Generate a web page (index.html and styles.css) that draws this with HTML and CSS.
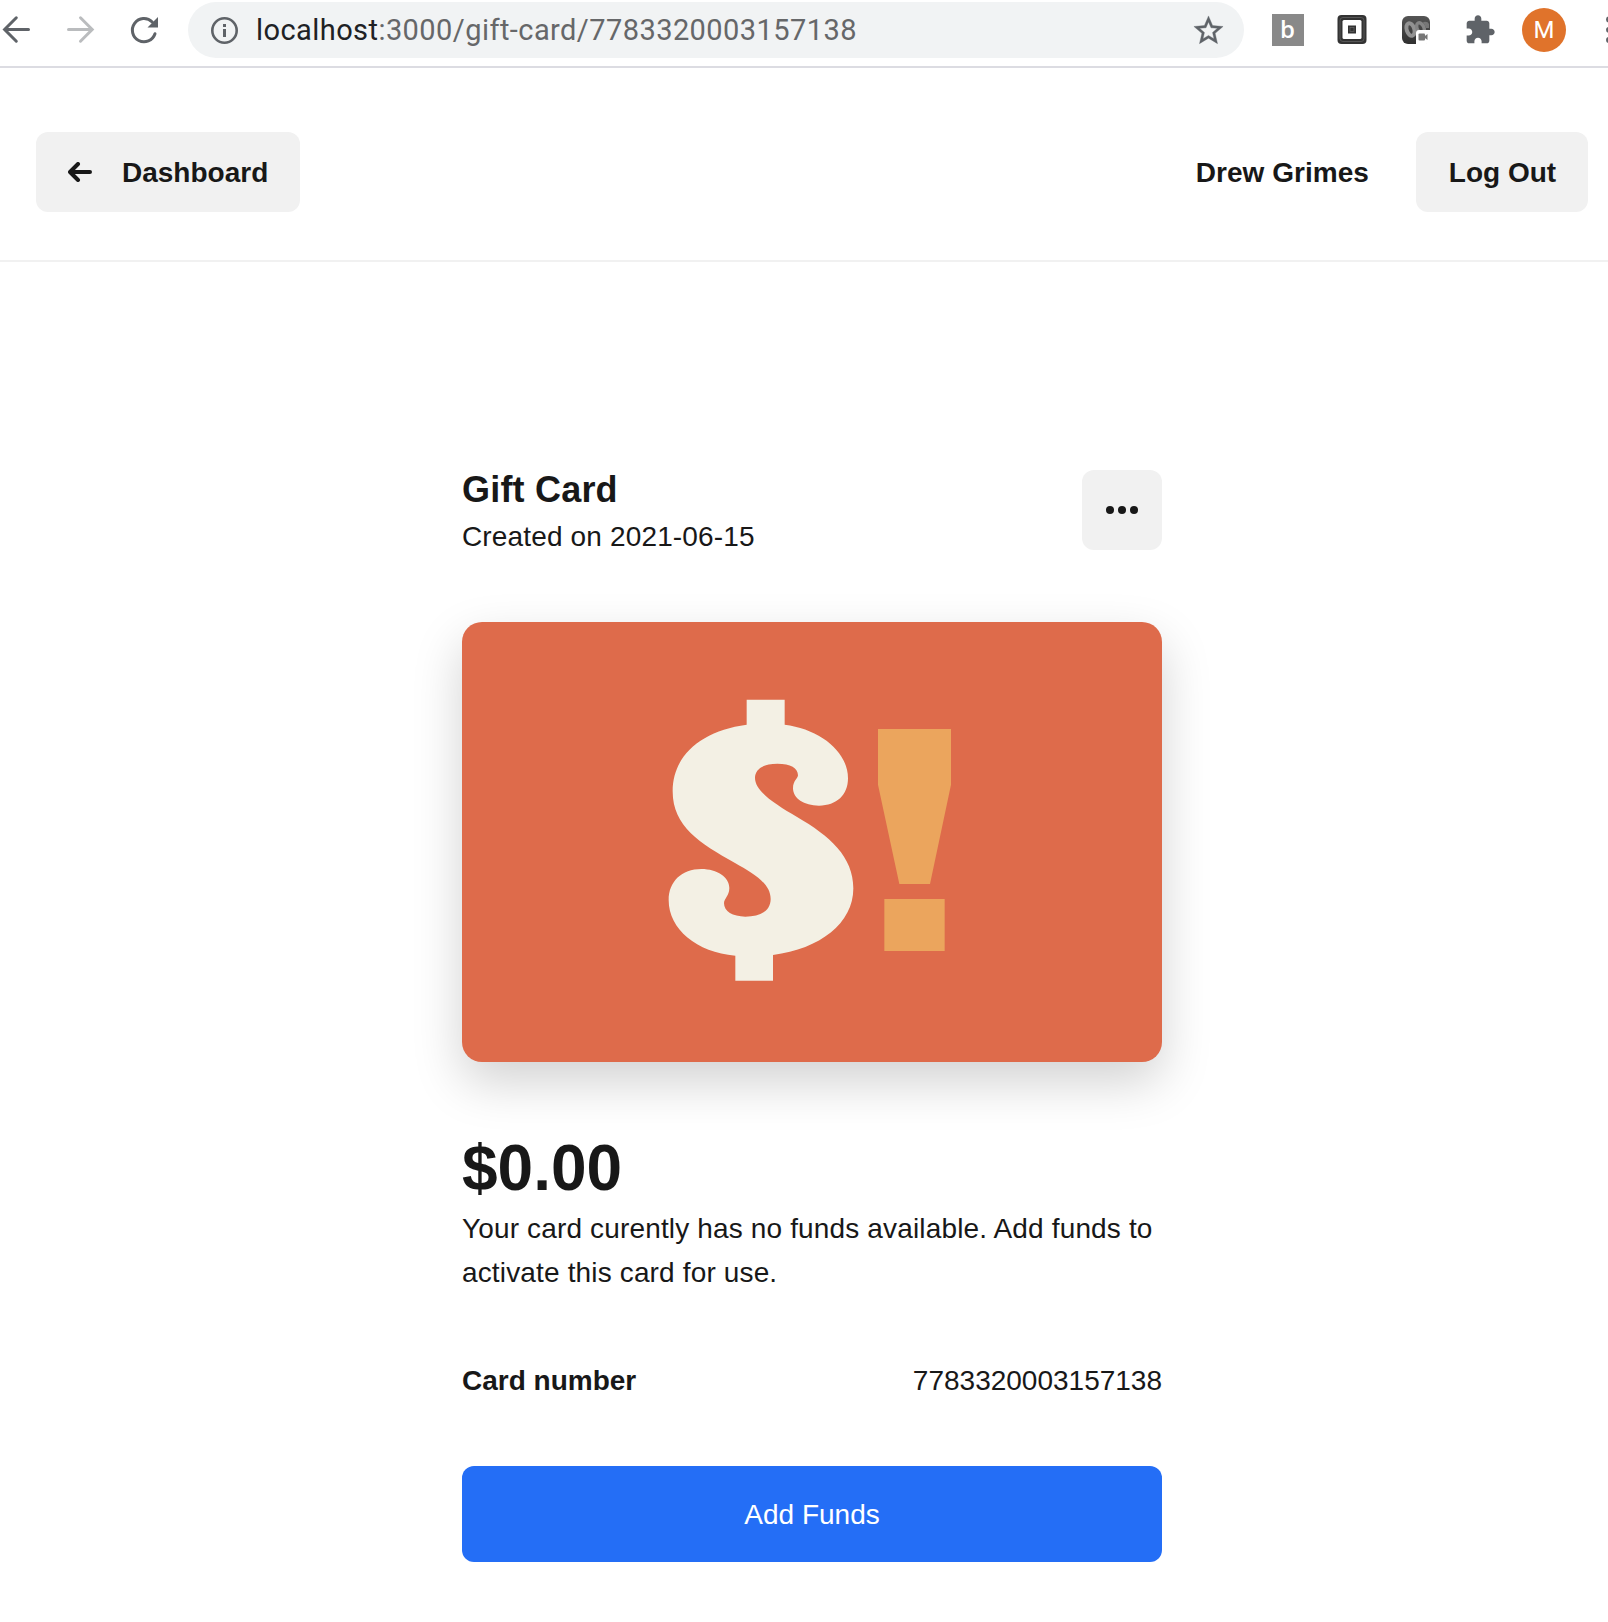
FILE: index.html
```html
<!DOCTYPE html>
<html lang="en">
<head>
<meta charset="utf-8">
<title>Gift Card</title>
<link rel="stylesheet" href="styles.css">
</head>
<body>
<div class="browser-bar">
  <svg class="nav-icon" viewBox="0 0 32 32"><path d="M28.5 15.5H5M16.300 3.800L4.600 15.500L16.300 27.200" fill="none" stroke="#5f6368" stroke-width="3" stroke-linejoin="miter" stroke-linecap="round"/></svg>
  <svg class="nav-icon" viewBox="0 0 32 32"><path d="M4.500 15.500H27.500M16.500 3.800L28.200 15.500L16.500 27.200" fill="none" stroke="#babcbe" stroke-width="3" stroke-linecap="round"/></svg>
  <svg class="nav-icon" viewBox="0 0 32 32"><path d="M27 19.800A11.600 11.600 0 1 1 24.200 8" fill="none" stroke="#5f6368" stroke-width="3" stroke-linecap="round"/><path d="M30 3V13.500H19.500Z" fill="#5f6368"/></svg>
  <div class="address">
    <svg class="info-icon" viewBox="0 0 28 28"><circle cx="14.500" cy="14.500" r="12.200" fill="none" stroke="#5f6368" stroke-width="2.600"/><path d="M13 8h3v3h-3zM13 13h3v8h-3z" fill="#5f6368"/></svg>
    <span class="url"><span class="host">localhost</span>:3000/gift-card/7783320003157138</span>
    <svg class="star-icon" viewBox="0 0 24 24"><path fill="#5f6368" stroke="#5f6368" stroke-width=".25" d="M22 9.240l-7.190-.620L12 2 9.190 8.630 2 9.240l5.460 4.730L5.820 21 12 17.270 18.180 21l-1.630-7.030L22 9.240zM12 15.400l-3.760 2.270 1-4.280-3.320-2.880 4.380-.380L12 6.100l1.710 4.040 4.380.380-3.320 2.880 1 4.280L12 15.400z"/></svg>
  </div>
  <div class="extensions">
    <span class="ext-b">b</span>
    <svg class="ext" viewBox="0 0 32 32"><rect x="1.500" y="1" width="29" height="29" rx="4" fill="#333"/><rect x="4" y="3.500" width="24" height="24" rx="3" fill="none" stroke="#606060" stroke-width=".8"/><rect x="6.500" y="6" width="19" height="19" rx="1.500" fill="#fff"/><rect x="12" y="11.500" width="8" height="8" fill="#333"/><rect x="14" y="13.500" width="4" height="4" fill="none" stroke="#666" stroke-width=".7"/></svg>
    <svg class="ext" viewBox="0 0 32 32">
      <defs><linearGradient id="tile" x1="0" y1="0" x2="0" y2="1"><stop offset="0" stop-color="#555"/><stop offset="1" stop-color="#303030"/></linearGradient></defs>
      <rect x="2" y="2" width="28" height="28" rx="6" fill="url(#tile)"/>
      <ellipse cx="10.500" cy="15.500" rx="3.800" ry="6.500" transform="rotate(-18 10.500 15.500)" fill="none" stroke="#929292" stroke-width="4"/>
      <ellipse cx="20.500" cy="14" rx="3.400" ry="5.500" transform="rotate(-25 20.500 14)" fill="none" stroke="#858585" stroke-width="3.500"/>
      <path d="M23 8Q28 7 29 10V14H26Z" fill="#777"/>
      <path d="M16 30V19Q16 16 19 16H30V26Q30 30 26 30Z" fill="#fff"/>
      <rect x="18.500" y="19.500" width="6.500" height="7" rx="1" fill="#777"/><path d="M23.500 23L27.500 20V26Z" fill="#777"/>
    </svg>
    <svg class="ext" viewBox="0 0 24 24"><path fill="#5f6368" d="M20.500 11H19V7c0-1.100-.900-2-2-2h-4V3.500C13 2.120 11.880 1 10.500 1S8 2.120 8 3.500V5H4c-1.100 0-1.990.900-1.990 2v3.800H3.500c1.490 0 2.700 1.210 2.700 2.700s-1.210 2.700-2.700 2.700H2V20c0 1.100.900 2 2 2h3.800v-1.500c0-1.490 1.210-2.700 2.700-2.700 1.490 0 2.700 1.210 2.700 2.700V22H17c1.100 0 2-.900 2-2v-4h1.500c1.380 0 2.500-1.120 2.500-2.500S21.880 11 20.500 11z"/></svg>
  </div>
  <span class="avatar">M</span>
  <svg class="menu-icon" viewBox="0 0 8 32"><circle cx="4" cy="5.500" r="3" fill="#5f6368"/><circle cx="4" cy="15.800" r="3" fill="#5f6368"/><circle cx="4" cy="26" r="3" fill="#5f6368"/></svg>
</div>

<header class="header">
  <button class="btn back"><svg class="back-icon" viewBox="0 0 24 20"><path d="M22 10H2.500M10 2L2 10L10 18" fill="none" stroke="#181818" stroke-width="4" stroke-linecap="round" stroke-linejoin="round"/></svg><span class="label">Dashboard</span></button>
  <div class="account"><span class="label user">Drew Grimes</span><button class="btn logout"><span class="label">Log Out</span></button></div>
</header>

<main class="content">
  <div class="title-row">
    <div>
      <h1 class="title">Gift Card</h1>
      <p class="text">Created on 2021-06-15</p>
    </div>
    <button class="btn more" aria-label="More"><svg class="more-icon" viewBox="0 0 32 8"><circle cx="4" cy="4" r="4"/><circle cx="16" cy="4" r="4"/><circle cx="28" cy="4" r="4"/></svg></button>
  </div>
  <svg class="gift-card" viewBox="-534 -174 2100 1320">
    <path fill="#f3f0e4" d="M320 59H434V134C540 147 624 215 624 295C624 345 590 377 537 377C492 377 459 355 459 325C459 302 474 295 474 286C474 264 452 251 412 251C370 251 345 267 345 294C345 335 410 375 470 410C570 468 640 530 640 625C640 730 540 807 399 825V902H286V827C170 817 86 748 86 660C86 605 125 567 184 567C232 567 268 592 268 624C268 648 252 655 252 670C252 694 278 710 316 710C364 710 392 691 392 657C392 610 340 580 285 549C180 490 98 440 98 334C98 225 185 152 320 134Z"/>
    <path fill="#eba55d" d="M714 147H933V314L870 612H778L714 314ZM733 657H914V813H733Z"/>
  </svg>
  <p class="amount">$0.00</p>
  <p class="text">Your card curently has no funds available. Add funds to activate this card for use.</p>
  <div class="detail"><strong>Card number</strong><span>7783320003157138</span></div>
  <button class="add-funds">Add Funds</button>
</main>
</body>
</html>
```

FILE: styles.css
```css
* { box-sizing: border-box; }
body {
  margin: 0;
  min-height: 1622px;
  overflow-x: hidden;
  background: #fff;
  color: #181818;
  font: 28px/44px "Liberation Sans", Arial, sans-serif;
}
h1, p { margin: 0; }
button { border: 0; font: inherit; color: inherit; }
svg { display: block; flex: none; }

.browser-bar {
  display: flex;
  align-items: center;
  height: 68px;
  padding-bottom: 6px;
  border-bottom: 2px solid #dcdce2;
  overflow: hidden;
}
.nav-icon { width: 32px; height: 32px; margin-right: 32px; }
.nav-icon:nth-child(3) { margin-right: 28px; }
.address {
  display: flex;
  flex: none;
  align-items: center;
  width: 1056px;
  height: 56px;
  padding: 0 18px 0 22px;
  border-radius: 28px;
  background: #f1f3f4;
}
.info-icon { width: 28px; height: 28px; }
.url {
  flex: 1;
  margin-left: 18px;
  color: #666769;
  font-family: Roboto, sans-serif;
  font-size: 29px;
  letter-spacing: 0.43px;
  white-space: nowrap;
}
.host { color: #202124; }
.star-icon { width: 35px; height: 35px; }
.extensions { display: flex; gap: 32px; margin-left: 28px; }
.ext { width: 32px; height: 32px; }
.ext-b {
  width: 32px;
  height: 32px;
  padding-right: 1px;
  background: #898989;
  color: #fff;
  font: 600 24px/30px "Open Sans", sans-serif;
  text-align: center;
}
.avatar {
  flex: none;
  width: 44px;
  height: 44px;
  margin-left: 26px;
  border-radius: 50%;
  background: #e0732b;
  color: #fff;
  font: 24px/45px Roboto, sans-serif;
  text-align: center;
}
.menu-icon { width: 8px; height: 32px; margin-left: 39px; }

.header {
  display: flex;
  justify-content: space-between;
  align-items: flex-start;
  height: 194px;
  padding: 64px 20px 0 36px;
  border-bottom: 2px solid #f1f1f1;
  font-weight: 700;
}
.btn {
  display: flex;
  align-items: center;
  justify-content: center;
  height: 80px;
  padding: 0 32px;
  border-radius: 12px;
  background: #f1f1f1;
}
.label { padding-top: 1px; }
.back { gap: 30px; }
.back-icon { width: 24px; height: 20px; }
.account { display: flex; align-items: center; gap: 47px; }
.user { letter-spacing: 0.05px; }
.logout { width: 172px; padding: 0 31px 0 32px; }

.content { width: 700px; margin: 204px 0 0 462px; }
.title-row { display: flex; justify-content: space-between; }
.title { font-size: 36px; line-height: 48px; letter-spacing: 0.2px; }
.text { padding-top: 1px; letter-spacing: 0.15px; }
.more { width: 80px; margin-top: 4px; padding: 0; }
.more-icon { width: 32px; height: 8px; fill: #181818; }
.gift-card {
  width: 700px;
  height: 440px;
  margin-top: 63px;
  border-radius: 20px;
  background: #de6b4b;
  box-shadow: 0 20px 50px rgba(0, 0, 0, 0.18);
}
.amount {
  margin-top: 68px;
  font-size: 64px;
  font-weight: 700;
  line-height: 76px;
}
.detail { display: flex; justify-content: space-between; margin: 64px 0 63px; }
.add-funds {
  display: block;
  width: 100%;
  height: 96px;
  padding-top: 2px;
  border-radius: 12px;
  background: #246ef6;
  color: #fff;
}
```
